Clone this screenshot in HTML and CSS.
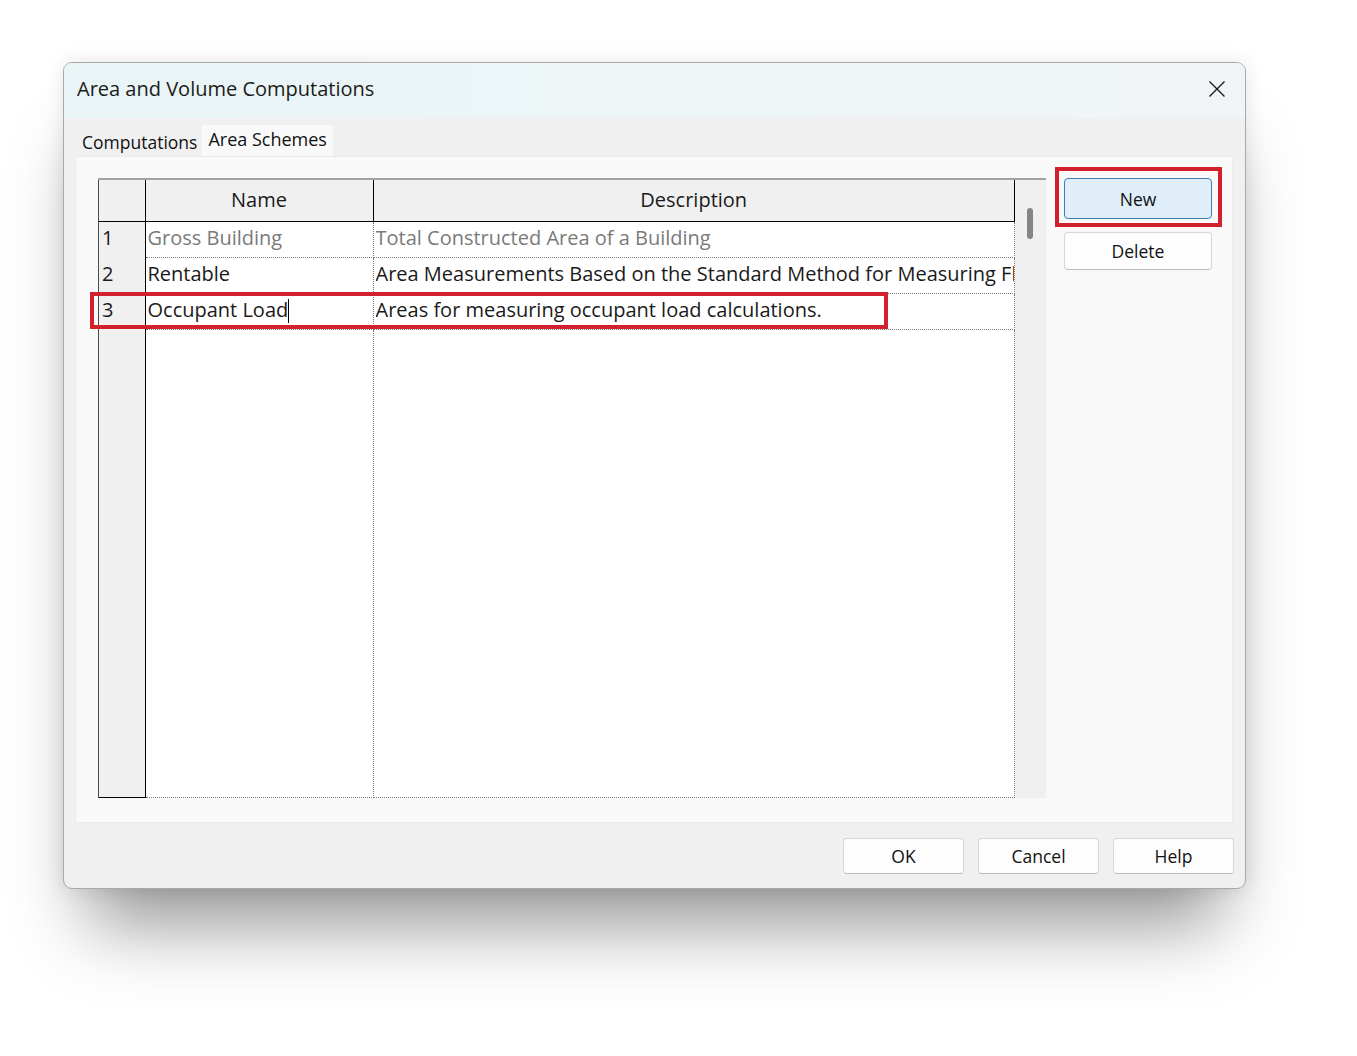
FILE: index.html
```html
<!DOCTYPE html>
<html>
<head>
<meta charset="utf-8">
<link rel="stylesheet" href="styles.css">
</head>
<body>
<div class="dialog">
  <div class="titlebar">
    <span class="title">Area and Volume Computations</span>
    <svg class="close" width="18" height="18" viewBox="0 0 18 18"><path d="M1.5 1.5 L16.5 16.5 M16.5 1.5 L1.5 16.5" stroke="#1a1a1a" stroke-width="1.4" fill="none"/></svg>
  </div>
  <div class="tabs">
    <div class="tab">Computations</div>
    <div class="tab active">Area Schemes</div>
  </div>
  <div class="panel">
    <div class="gridwrap">
      <div class="grid">
        <table>
          <thead>
            <tr><th class="num"></th><th class="name">Name</th><th class="desc">Description</th></tr>
          </thead>
          <tbody>
            <tr class="dim"><td class="num">1</td><td class="name">Gross Building</td><td class="desc"><div class="clip">Total Constructed Area of a Building</div></td></tr>
            <tr><td class="num">2</td><td class="name">Rentable</td><td class="desc"><div class="clip">Area Measurements Based on the Standard Method for Measuring Floor Area in Office Buildings</div></td></tr>
            <tr><td class="num">3</td><td class="name">Occupant Load<span class="caret"></span></td><td class="desc"><div class="clip">Areas for measuring occupant load calculations.</div></td></tr>
            <tr class="filler"><td class="num"></td><td class="name"></td><td class="desc"></td></tr>
          </tbody>
        </table>
      </div>
      <div class="scrollbar"><div class="thumb"></div></div>
    </div>
    <div class="sidebtns">
      <button class="btn primary">New</button>
      <button class="btn side">Delete</button>
    </div>
  </div>
  <div class="footer">
    <button class="btn foot">OK</button>
    <button class="btn foot">Cancel</button>
    <button class="btn foot">Help</button>
  </div>
  <div class="mark mark-row"></div>
  <div class="mark mark-new"></div>
</div>
</body>
</html>
```
FILE: styles.css
```css
html, body {
  margin: 0;
  padding: 0;
  background: #ffffff;
}
body {
  min-height: 1056px;
  overflow: hidden;
  font-family: "Open Sans", "Noto Sans", "Liberation Sans", sans-serif;
  color: #1a1a1a;
  padding-top: 62px;
  box-sizing: border-box;
}
.dialog {
  position: relative;
  box-sizing: border-box;
  margin: 0 0 0 63px;
  width: 1183px;
  height: 827px;
  border: 1px solid #a9a9a9;
  border-radius: 9px;
  background: #f0f0f0;
  display: flex;
  flex-direction: column;
  box-shadow: 0 0 20px rgba(0,0,0,0.10), 0 60px 70px -25px rgba(0,0,0,0.42);
}
.titlebar {
  height: 55px;
  flex: none;
  display: flex;
  align-items: center;
  justify-content: space-between;
  padding: 0 19px 4px 13px;
  box-sizing: border-box;
  border-radius: 8px 8px 0 0;
  background: linear-gradient(90deg, #e8f4f6 0%, #eef5f7 60%, #f0f4f6 100%);
}
.title {
  font-size: 20px;
  color: #1b1b1b;
}
.close { display: block; }
.tabs {
  height: 38px;
  flex: none;
  display: flex;
  align-items: flex-end;
  padding-left: 14px;
}
.tab {
  font-size: 17.5px;
  height: 28px;
  line-height: 28px;
  padding: 0 4px;
  color: #111;
}
.tab.active {
  font-size: 18px;
  height: 31px;
  line-height: 29px;
  padding: 0 6px;
  background: #f9f9f9;
  margin-left: 1px;
}
.panel {
  flex: none;
  height: 667px;
  box-sizing: border-box;
  margin: 0 12px 0 11px;
  background: #f9f9f9;
  border: 1px solid #ebebeb;
  padding: 21px 0 0 22px;
  display: flex;
  gap: 18px;
  align-items: flex-start;
}
.gridwrap {
  display: flex;
  width: 948px;
  height: 620px;
  border-top: 2px solid #a2a2a2;
  box-sizing: border-box;
}
.grid {
  width: 917px;
  height: 618px;
  background: #ffffff;
  border-left: 1px solid #4a4a4a;
  box-sizing: border-box;
}
table {
  border-collapse: collapse;
  table-layout: fixed;
  width: 916px;
  height: 618px;
  font-size: 20px;
  line-height: 26px;
}
th {
  box-sizing: border-box;
  height: 41px;
  font-weight: normal;
  background: #f0f0f0;
  border-right: 1px solid #000;
  border-bottom: 1px solid #000;
  padding: 0;
  text-align: center;
  color: #1a1a1a;
}
th.num { width: 46px; }
th.name { width: 228px; }
th.desc { width: auto; }
td {
  box-sizing: border-box;
  height: 36px;
  padding: 0 0 3px 2px;
  border-right: 1px dotted #7a7a7a;
  border-bottom: 1px dotted #7a7a7a;
  white-space: nowrap;
  overflow: hidden;
  color: #1a1a1a;
}
td.num {
  background: #f0f0f0;
  border-right: 1px solid #000;
  border-bottom: none;
  padding-left: 3px;
}
.filler td { height: auto; }
.filler td.num { border-bottom: 1px solid #000; }
tr.dim td.name, tr.dim td.desc { color: #7a7a7a; }
.clip {
  overflow: hidden;
  white-space: nowrap;
}
.caret {
  display: inline-block;
  width: 1px;
  height: 24px;
  background: #000;
  vertical-align: -6px;
}
.scrollbar {
  width: 31px;
  height: 618px;
  background: #f0f0f0;
  box-sizing: border-box;
  padding: 28px 0 0 12px;
}
.thumb {
  width: 6px;
  height: 31px;
  border-radius: 3px;
  background: #858585;
}
.sidebtns {
  display: flex;
  flex-direction: column;
  gap: 13px;
  width: 148px;
}
.btn {
  font-family: "Open Sans", "Noto Sans", "Liberation Sans", sans-serif;
  font-size: 17.5px;
  color: #111;
  background: #fdfdfd;
  border: 1px solid #d6d6d6;
  border-bottom-color: #bdbdbd;
  border-radius: 4px;
  padding: 0;
  box-sizing: border-box;
}
.btn.primary {
  height: 41px;
  background: #e0eef9;
  border: 1px solid #3d7fb4;
}
.btn.side { height: 38px; }
.footer {
  flex: 1;
  display: flex;
  justify-content: flex-end;
  gap: 14px;
  padding: 15px 11px 0 0;
  box-sizing: border-box;
}
.btn.foot {
  width: 121px;
  height: 36px;
}
.mark {
  position: absolute;
  border: 4px solid #d3202f;
  box-sizing: border-box;
}
.mark-row {
  left: 26px;
  top: 229px;
  width: 798px;
  height: 37px;
}
.mark-new {
  left: 991px;
  top: 104px;
  width: 167px;
  height: 60px;
}
```
